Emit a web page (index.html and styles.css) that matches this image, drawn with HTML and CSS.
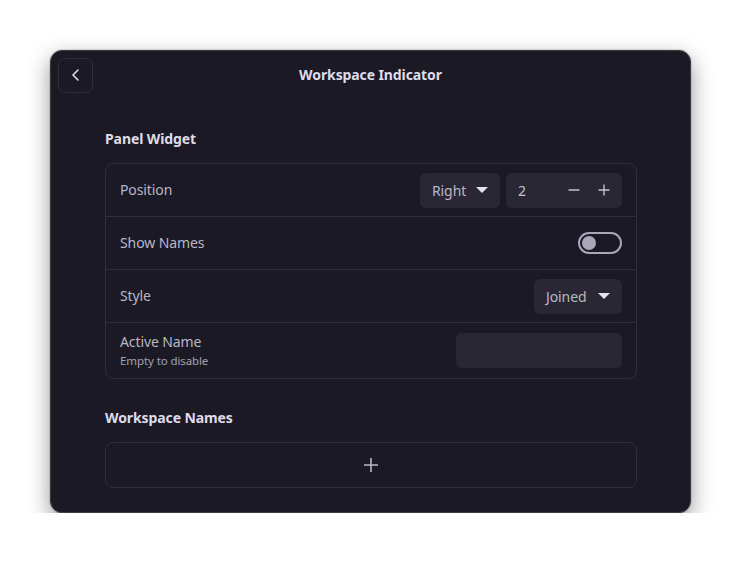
FILE: index.html
```html
<!DOCTYPE html>
<html>
<head>
<meta charset="utf-8">
<link rel="stylesheet" href="styles.css">
</head>
<body>
<div class="window">
  <header class="headerbar">
    <button class="back" aria-label="Back">
      <svg width="16" height="16" viewBox="0 0 16 16"><path d="M10 3 L5 8 L10 13" fill="none" stroke="currentColor" stroke-width="1.6" stroke-linecap="round" stroke-linejoin="round"/></svg>
    </button>
    <div class="title">Workspace Indicator</div>
  </header>
  <main class="content">
    <h2 class="group-title">Panel Widget</h2>
    <div class="list">
      <div class="row">
        <span class="label">Position</span>
        <div class="controls">
          <div class="dropdown dd-right">Right <span class="arrow"></span></div>
          <div class="spin">
            <span class="spin-val">2</span>
            <svg class="spin-btn" width="12" height="12" viewBox="0 0 12 12"><path d="M0.5 6 H11.5" stroke="currentColor" stroke-width="1.4"/></svg>
            <svg class="spin-btn" width="12" height="12" viewBox="0 0 12 12"><path d="M0.5 6 H11.5 M6 0.5 V11.5" stroke="currentColor" stroke-width="1.4"/></svg>
          </div>
        </div>
      </div>
      <div class="row">
        <span class="label">Show Names</span>
        <div class="switch"><span class="knob"></span></div>
      </div>
      <div class="row">
        <span class="label">Style</span>
        <div class="dropdown dd-joined">Joined <span class="arrow"></span></div>
      </div>
      <div class="row row-tall">
        <div class="label-col">
          <span class="label">Active Name</span>
          <span class="sublabel">Empty to disable</span>
        </div>
        <div class="entry"></div>
      </div>
    </div>
    <h2 class="group-title second">Workspace Names</h2>
    <div class="add">
      <svg width="16" height="16" viewBox="0 0 16 16"><path d="M1 8 H15 M8 1 V15" stroke="currentColor" stroke-width="1.6"/></svg>
    </div>
  </main>
</div>
</body>
</html>
```
FILE: styles.css
```css
html, body {
  margin: 0;
  padding: 0;
  background: #ffffff;
}
body {
  font-family: "Noto Sans", "Open Sans", sans-serif;
  padding: 50px 0 0 50px;
}
.window {
  box-sizing: border-box;
  width: 641px;
  height: 463px;
  background: #1b1a24;
  border: 1px solid #3c3b46;
  border-radius: 12px;
  box-shadow: 0 8px 22px rgba(0,0,0,0.42), 0 0 0 1px rgba(0,0,0,0.1);
  display: flex;
  flex-direction: column;
  overflow: hidden;
}
.headerbar {
  position: relative;
  height: 47px;
  display: flex;
  align-items: center;
  padding: 0 7px;
}
.back {
  width: 35px;
  height: 35px;
  margin-top: 1px;
  box-sizing: border-box;
  border: 1px solid #2e2d39;
  background: transparent;
  border-radius: 7px;
  color: #dedcea;
  display: flex;
  align-items: center;
  justify-content: center;
  padding: 0;
}
.title {
  position: absolute;
  left: 0;
  right: 0;
  top: 14px;
  text-align: center;
  font-weight: 700;
  font-size: 14px;
  letter-spacing: -0.1px;
  color: #dedcec;
  pointer-events: none;
}
.content {
  padding: 31px 53px 0 54px;
  display: flex;
  flex-direction: column;
}
.group-title {
  margin: 0 0 14px 0;
  font-size: 14px;
  letter-spacing: -0.1px;
  font-weight: 700;
  color: #dedcec;
  line-height: 20px;
}
.group-title.second {
  margin-top: 29px;
}
.list {
  border: 1px solid #2f2e3a;
  border-radius: 8px;
  display: flex;
  flex-direction: column;
}
.row {
  height: 52px;
  display: flex;
  align-items: center;
  justify-content: space-between;
  padding: 0 14px;
  border-bottom: 1px solid #2f2e3a;
}
.row:last-child {
  border-bottom: none;
}
.row-tall {
  height: 55px;
}
.label {
  font-size: 14px;
  letter-spacing: -0.1px;
  color: #b9b7c6;
  margin-top: -2px;
}
.label-col {
  display: flex;
  flex-direction: column;
  gap: 2px;
  margin-top: -1px;
}
.label-col .label {
  margin-top: 0;
}
.sublabel {
  font-size: 11.5px;
  letter-spacing: -0.1px;
  color: #a3a1b0;
}
.controls {
  display: flex;
  gap: 6px;
}
.dropdown {
  box-sizing: border-box;
  height: 35px;
  background: #282733;
  border-radius: 6px;
  padding: 0 12px;
  display: flex;
  align-items: center;
  justify-content: space-between;
  color: #b9b7c6;
  font-size: 14px;
  letter-spacing: -0.1px;
}
.dd-right {
  width: 80px;
}
.dd-joined {
  width: 88px;
}
.arrow {
  width: 0;
  height: 0;
  border-left: 6px solid transparent;
  border-right: 6px solid transparent;
  border-top: 6px solid #e4e2f0;
}
.spin {
  box-sizing: border-box;
  width: 116px;
  height: 35px;
  background: #282733;
  border-radius: 6px;
  display: flex;
  align-items: center;
  padding: 0 12px 0 12px;
  color: #c4c2d0;
  font-size: 14px;
}
.spin-val {
  flex: 1;
}
.spin-btn {
  color: #c4c2d0;
  margin-left: 18px;
}
.switch {
  box-sizing: border-box;
  width: 44px;
  height: 22px;
  border: 2px solid #a9a7b6;
  border-radius: 11px;
  display: flex;
  align-items: center;
  padding-left: 2px;
}
.knob {
  width: 14px;
  height: 14px;
  border-radius: 50%;
  background: #aaa8b8;
}
.entry {
  width: 166px;
  height: 35px;
  background: #282733;
  border-radius: 6px;
}
.add {
  box-sizing: border-box;
  height: 46px;
  border: 1px solid #2f2e3a;
  border-radius: 8px;
  display: flex;
  align-items: center;
  justify-content: center;
  color: #b9b7c6;
}
```
